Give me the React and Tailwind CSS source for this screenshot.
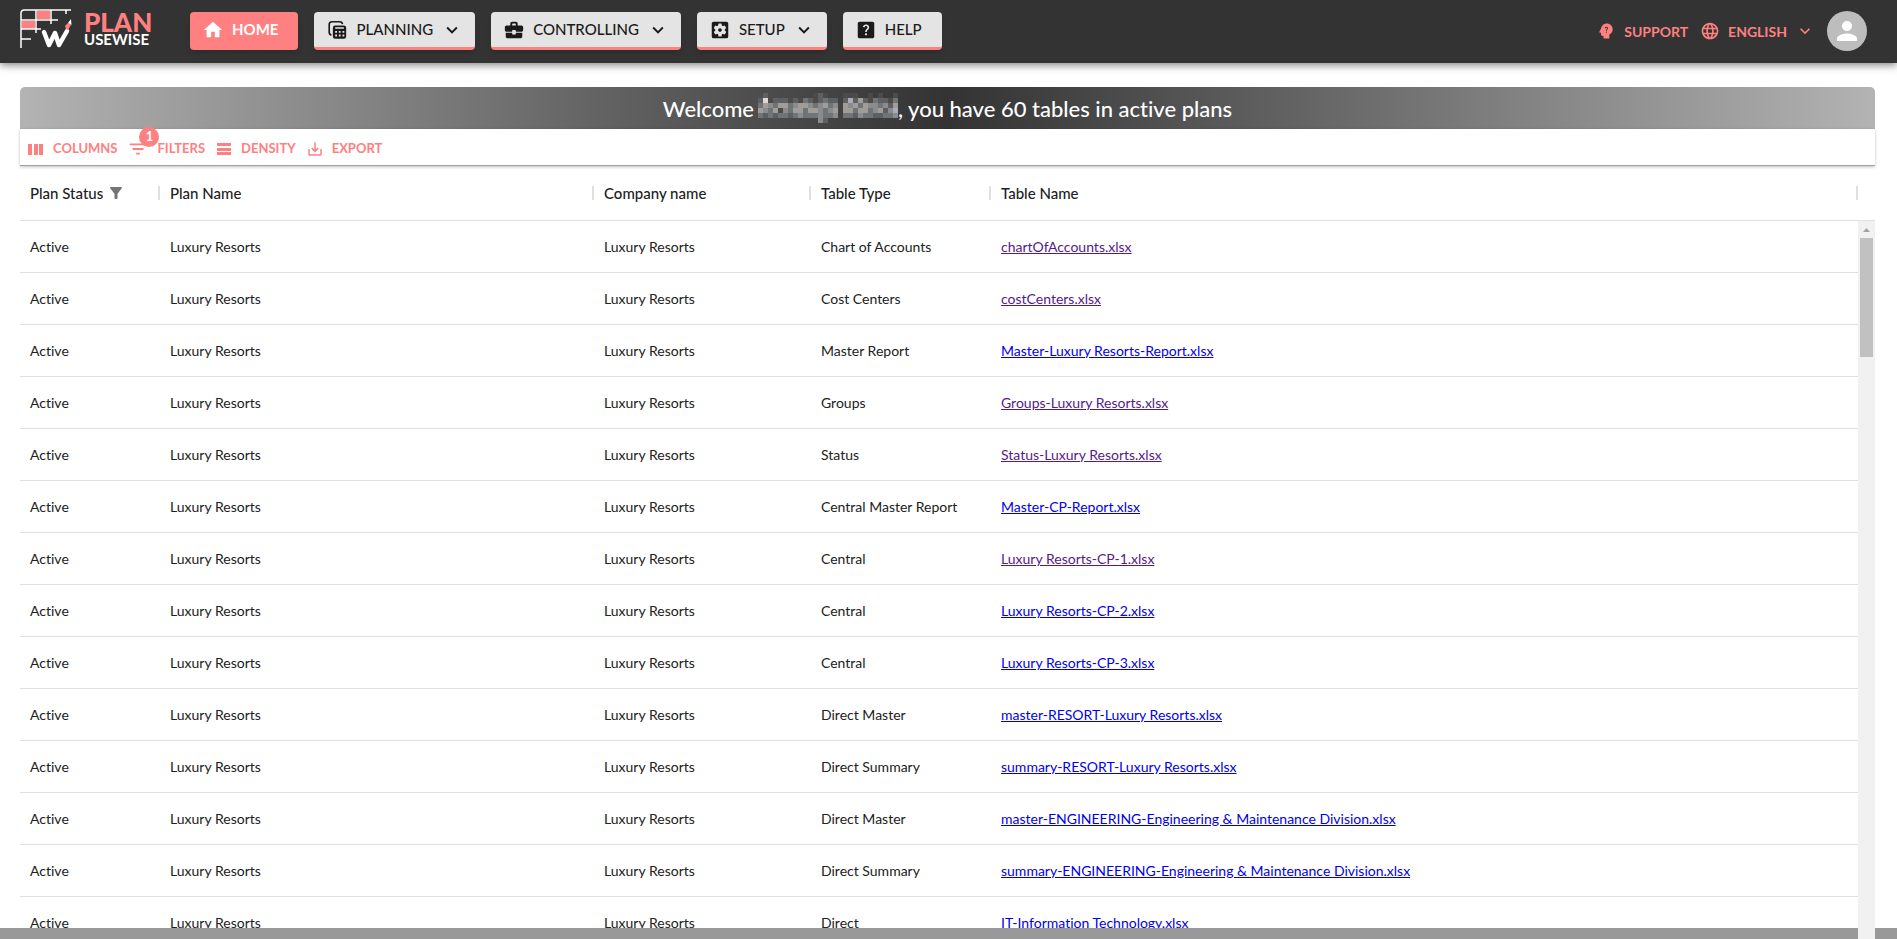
import { MdHome, MdSettingsApplications, MdHelpCenter, MdPsychologyAlt, MdLanguage, MdPerson, MdFilterList, MdSaveAlt, MdFilterAlt, MdExpandMore } from 'react-icons/md';
import { clsx } from 'clsx';

const rows = [
    { type: 'Chart of Accounts', file: 'chartOfAccounts.xlsx', visited: true },
    { type: 'Cost Centers', file: 'costCenters.xlsx', visited: true },
    { type: 'Master Report', file: 'Master-Luxury Resorts-Report.xlsx' },
    { type: 'Groups', file: 'Groups-Luxury Resorts.xlsx', visited: true },
    { type: 'Status', file: 'Status-Luxury Resorts.xlsx', visited: true },
    { type: 'Central Master Report', file: 'Master-CP-Report.xlsx' },
    { type: 'Central', file: 'Luxury Resorts-CP-1.xlsx', visited: true },
    { type: 'Central', file: 'Luxury Resorts-CP-2.xlsx' },
    { type: 'Central', file: 'Luxury Resorts-CP-3.xlsx' },
    { type: 'Direct Master', file: 'master-RESORT-Luxury Resorts.xlsx' },
    { type: 'Direct Summary', file: 'summary-RESORT-Luxury Resorts.xlsx' },
    { type: 'Direct Master', file: 'master-ENGINEERING-Engineering & Maintenance Division.xlsx' },
    { type: 'Direct Summary', file: 'summary-ENGINEERING-Engineering & Maintenance Division.xlsx' },
    { type: 'Direct', file: 'IT-Information Technology.xlsx' },
];

const columns = [
    { name: 'Plan Status', width: 'w-[140px]', filtered: true },
    { name: 'Plan Name', width: 'w-[434px]' },
    { name: 'Company name', width: 'w-[217px]' },
    { name: 'Table Type', width: 'w-[180px]' },
    { name: 'Table Name', width: '' },
];

// Pixelated user name, one character per block
const mosaic = [
    '.b.........aba...aaa..a.a..a',
    'bgabbbabacbabcbb.bfbebacbbac',
    'cedceecdeedcdecd.edeceddcdbe',
    'edceadceeceedcde.eeceecdebdf',
    'cbcbccbcdcccdccd.ccbdccbbccd',
    '............db..............',
];
const mosaicColors = { a: '#4f4a46', b: '#5d5f63', c: '#6f7577', d: '#8b8a8c', e: '#a09c98', f: '#a9adb8', g: '#ddd8d2' };

function PlanningIcon({ className }) {
    return (
        <svg viewBox="0 0 24 24" className={className} fill="currentColor">
            <path d="M6 17.500A3 3 0 0 1 3.500 14.500V6A3 3 0 0 1 6.500 3H15a3 3 0 0 1 3 2.500" fill="none" stroke="currentColor" strokeWidth="1.800" />
            <path fillRule="evenodd" d="M10 7h9.500a2.500 2.500 0 0 1 2.500 2.500v9.500a2.500 2.500 0 0 1-2.500 2.500H10A2.500 2.500 0 0 1 7.500 19V9.500A2.500 2.500 0 0 1 10 7zM10 9v1.500h9.500V9zM10 13v2h2v-2zm4 0v2h2v-2zm4 0v2h2v-2zM10 17v2h2v-2zm4 0v2h2v-2zm4 0v2h2v-2z" />
        </svg>
    );
}

function BriefcaseIcon({ className }) {
    return (
        <svg viewBox="0 0 24 24" className={className} fill="currentColor">
            <path d="M10 16v-1H3.010L3 19c0 1.100.9 2 2 2h14c1.100 0 2-.9 2-2v-4h-7v1c0 .55-.45 1-1 1h-2c-.55 0-1-.45-1-1zM20 7h-4V5c0-1.100-.9-2-2-2h-4c-1.100 0-2 .9-2 2v2H4c-1.100 0-2 .9-2 2v3c0 1.100.9 2 2 2h6v-1c0-.55.45-1 1-1h2c.55 0 1 .45 1 1v1h6c1.100 0 2-.9 2-2V9c0-1.100-.9-2-2-2zm-6 0h-4V6c0-.55.45-1 1-1h2c.55 0 1 .45 1 1v1z" />
        </svg>
    );
}

function ColumnsIcon() {
    return (
        <svg viewBox="0 0 18 18" className="h-[18px] w-[18px]" fill="currentColor">
            <path d="M1 4h4v11H1zM7 4h4v11H7zM12 4h4v11h-4z" />
        </svg>
    );
}

function DensityIcon() {
    return (
        <svg viewBox="0 0 18 18" className="h-[18px] w-[18px]" fill="currentColor">
            <path d="M2 3h14v3H2zM2 8h14v3H2zM2 12h14v3H2z" />
        </svg>
    );
}

function Logo() {
    return (
        <a href="#" className="flex w-[130px] items-center gap-3" aria-label="Plan Usewise">
            <svg viewBox="0 0 52 44" className="h-11 w-[52px] shrink-0" fill="none">
                <path d="M17 2h13v8H17zM2 12h13v8H2z" fill="#ff8080" />
                <path d="M1 39V4a3 3 0 0 1 3-3h47M1 11h37M1 20h20M1 30h10M16 1v23M31 1v14M46 1v4" stroke="#fff" strokeWidth="1.500" />
                <path d="M24 23l5 13 6-12 4 12 8-14" stroke="#fff" strokeWidth="4.500" strokeLinecap="round" strokeLinejoin="round" />
                <path d="M45 17l3-3 3 2-3 5-2-1z" fill="#ff8080" />
                <path d="M48 14l3-4 .5 6z" fill="#fff" />
            </svg>
            <span className="flex flex-col pb-1">
                <span className="text-[26px] leading-[20px] font-black text-[#ff8080]">PLAN</span>
                <span className="text-[15px] leading-[15px] font-bold text-white">USEWISE</span>
            </span>
        </a>
    );
}

function NavButton({ icon: Icon, label, menu, active }) {
    return (
        <button
            className={clsx(
                'flex h-[38px] items-center gap-2 rounded border-b-3 border-[#ff8080] pl-3 text-[15px] shadow-md',
                menu ? 'pr-3' : 'pr-5',
                active ? 'bg-[#ff8080] font-bold text-white' : 'bg-[#e4e4e4] font-medium text-[#1a1a1a]',
            )}
        >
            <Icon className="h-[22px] w-[22px]" />
            {label}
            {menu && <MdExpandMore className="h-[22px] w-[22px]" />}
        </button>
    );
}

function ToolbarButton({ icon, label, children }) {
    return (
        <button className="relative flex h-5 items-center gap-2 text-[13px] font-bold text-[#ff8080]">
            {icon}
            {label}
            {children}
        </button>
    );
}

function HiddenName() {
    return (
        <svg viewBox="0 0 140 30" className="h-[30px] w-[140px]" shapeRendering="crispEdges" aria-hidden="true">
            {mosaic.map((line, y) =>
                [...line].map((c, x) => c !== '.' && (
                    <rect key={`${x}-${y}`} x={x * 5} y={y * 5} width="5" height="5" fill={mosaicColors[c]} />
                )),
            )}
        </svg>
    );
}

function Header() {
    return (
        <header className="z-10 flex h-[63px] shrink-0 items-center justify-between bg-[#333] pr-[30px] pb-px pl-5 shadow-[0_2px_8px_rgba(0,0,0,0.5)]">
            <div className="flex items-center gap-10">
                <Logo />
                <nav className="flex gap-4">
                    <NavButton icon={MdHome} label="HOME" active />
                    <NavButton icon={PlanningIcon} label="PLANNING" menu />
                    <NavButton icon={BriefcaseIcon} label="CONTROLLING" menu />
                    <NavButton icon={MdSettingsApplications} label="SETUP" menu />
                    <NavButton icon={MdHelpCenter} label="HELP" />
                </nav>
            </div>
            <div className="flex items-center gap-3 text-[14px] font-bold text-[#ff8080]">
                <button className="flex items-center gap-2">
                    <MdPsychologyAlt className="h-5 w-5" />
                    SUPPORT
                </button>
                <button className="flex items-center gap-2">
                    <MdLanguage className="h-5 w-5" />
                    ENGLISH
                    <MdExpandMore className="h-5 w-5" />
                </button>
                <button className="flex h-10 w-10 items-center justify-center rounded-full bg-[#bdbdbd] text-white" aria-label="Account">
                    <MdPerson className="h-[30px] w-[30px]" />
                </button>
            </div>
        </header>
    );
}

export default function App() {
    return (
        <div className="flex h-screen flex-col overflow-hidden bg-white font-[Lato,sans-serif] text-[#212121] [font-variant-ligatures:none]">
            <Header />
            <main className="mt-6 mr-[22px] ml-5 flex min-h-0 flex-1 flex-col">
                <h1 className="flex h-[42px] shrink-0 items-center justify-center rounded-t-[5px] bg-[linear-gradient(90deg,#b3b3b3,#333_50%,#b3b3b3)] text-[22px] font-medium text-white">
                    <span className="mr-1">Welcome</span>
                    <HiddenName />
                    <span>, you have 60 tables in active plans</span>
                </h1>

                {/* Toolbar */}
                <div className="flex h-[37px] shrink-0 items-center gap-[10px] border-b border-[#a0a0a0] px-[7px] pt-[3px] shadow-[0_1px_3px_rgba(0,0,0,0.25)]">
                    <ToolbarButton label="COLUMNS" icon={<ColumnsIcon />} />
                    <ToolbarButton label="FILTERS" icon={<MdFilterList className="h-[22px] w-[22px]" />}>
                        <span className="absolute -top-3 left-3 flex h-5 w-5 items-center justify-center rounded-full bg-[#ff8080] text-[13px] text-white">1</span>
                    </ToolbarButton>
                    <ToolbarButton label="DENSITY" icon={<DensityIcon />} />
                    <ToolbarButton label="EXPORT" icon={<MdSaveAlt className="h-[18px] w-[18px]" />} />
                </div>

                <div className="flex min-h-0 flex-1 overflow-hidden">
                    <div className="min-w-0 flex-1">
                        <table className="w-full table-fixed text-left text-[14px]">
                            <thead>
                                <tr className="h-[54px] border-b border-[#e0e0e0] text-[15px]">
                                    {columns.map((column) => (
                                        <th key={column.name} className={clsx('p-0 font-medium', column.width)}>
                                            <div className="flex h-[14px] items-center border-r-2 border-[#e0e0e0] pl-[10px] whitespace-nowrap">
                                                {column.name}
                                                {column.filtered && <MdFilterAlt className="ml-1 h-[18px] w-[18px] text-[#757575]" />}
                                            </div>
                                        </th>
                                    ))}
                                </tr>
                            </thead>
                            <tbody>
                                {rows.map((row) => (
                                    <tr key={row.file} className="h-[52px] border-b border-[#e0e0e0] whitespace-nowrap">
                                        <td className="pl-[10px]">Active</td>
                                        <td className="pl-[10px]">Luxury Resorts</td>
                                        <td className="pl-[10px]">Luxury Resorts</td>
                                        <td className="pl-[10px]">{row.type}</td>
                                        <td className="pl-[10px]">
                                            <a href="#" className={clsx('underline', row.visited ? 'text-[#551a8b]' : 'text-[#0000ee]')}>{row.file}</a>
                                        </td>
                                    </tr>
                                ))}
                            </tbody>
                        </table>
                    </div>
                    {/* Scrollbar */}
                    <div className="z-20 flex w-[17px] flex-col">
                        <div className="h-[55px] shrink-0 border-b border-[#e0e0e0]" />
                        <div className="flex flex-1 flex-col items-center bg-[#f1f1f1]">
                            <svg viewBox="0 0 17 17" className="h-[17px] w-[17px] shrink-0" fill="#a3a3a3">
                                <path d="M5 11h7L8.500 7z" />
                            </svg>
                            <div className="h-[119px] w-[13px] bg-[#c1c1c1]" />
                        </div>
                    </div>
                </div>
            </main>
            <footer className="fixed inset-x-0 bottom-0 z-10 h-[11px] bg-[#999]" />
        </div>
    );
}
